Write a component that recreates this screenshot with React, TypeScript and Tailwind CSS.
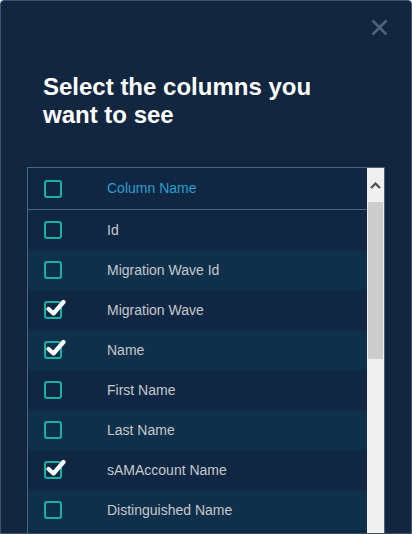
const columns = [
  { label: "Id", checked: false },
  { label: "Migration Wave Id", checked: false },
  { label: "Migration Wave", checked: true },
  { label: "Name", checked: true },
  { label: "First Name", checked: false },
  { label: "Last Name", checked: false },
  { label: "sAMAccount Name", checked: true },
  { label: "Distinguished Name", checked: false },
];

function Checkbox({ checked }: { checked?: boolean }) {
  return (
    <span className="relative block h-[18px] w-[18px] rounded-[3px] border-2 border-[#17b2a0]">
      {checked && (
        <svg
          className="absolute left-[0px] top-[-5px]"
          width="21"
          height="19"
          viewBox="0 0 21 19"
          fill="none"
        >
          <path
            d="M2.5 11 L7.5 15.5 L17.5 4"
            stroke="white"
            strokeWidth="4.2"
            strokeLinecap="round"
            strokeLinejoin="round"
          />
        </svg>
      )}
    </span>
  );
}

export default function App() {
  return (
    <div
      className="h-[534px] w-[412px] overflow-hidden rounded-t-[4px] border border-[#3d526b] bg-[#12263f]"
      style={{ fontFamily: '"Liberation Sans", Arial, sans-serif' }}
    >
      {/* Close */}
      <div className="flex justify-end pr-[23px] pt-[18px]">
        <svg width="17" height="17" viewBox="0 0 17 17">
          <path d="M1.5 1.5 L15.5 15.5 M15.5 1.5 L1.5 15.5" stroke="#4e627a" strokeWidth="2.6" />
        </svg>
      </div>

      <h2 className="mt-[37px] w-[340px] pl-[42px] text-[24px] font-bold leading-[28px] text-white">
        Select the columns you want to see
      </h2>

      {/* Table */}
      <div className="mx-[26px] mt-[38px] flex h-[400px] border border-[#4a6581]">
        <div className="flex-1">
          <div className="flex h-[42px] items-center border-b border-[#4a6581] bg-[#0f2742]">
            <div className="w-[79px] pl-[16px]">
              <Checkbox />
            </div>
            <span className="text-[14px] text-[#2b9fd0]">Column Name</span>
          </div>
          {columns.map((c, i) => (
            <div
              key={c.label}
              className={`flex h-[40px] items-center ${i % 2 === 0 ? "bg-[#0f2742]" : "bg-[#0e304a]"}`}
            >
              <div className="w-[79px] pl-[16px]">
                <Checkbox checked={c.checked} />
              </div>
              <span className="text-[14px] text-[#c5c9ce]">{c.label}</span>
            </div>
          ))}
          <div className="h-[40px] bg-[#0f2742]" />
        </div>

        {/* Scrollbar */}
        <div className="flex w-[17px] flex-col bg-[#f0f0f0]">
          <div className="flex h-[34px] items-center justify-center">
            <svg width="11" height="7" viewBox="0 0 11 7">
              <path d="M1 6 L5.5 1.5 L10 6" stroke="#505050" strokeWidth="2.2" fill="none" />
            </svg>
          </div>
          <div className="mx-[1px] h-[157px] bg-[#cdcdcd]" />
        </div>
      </div>
    </div>
  );
}
